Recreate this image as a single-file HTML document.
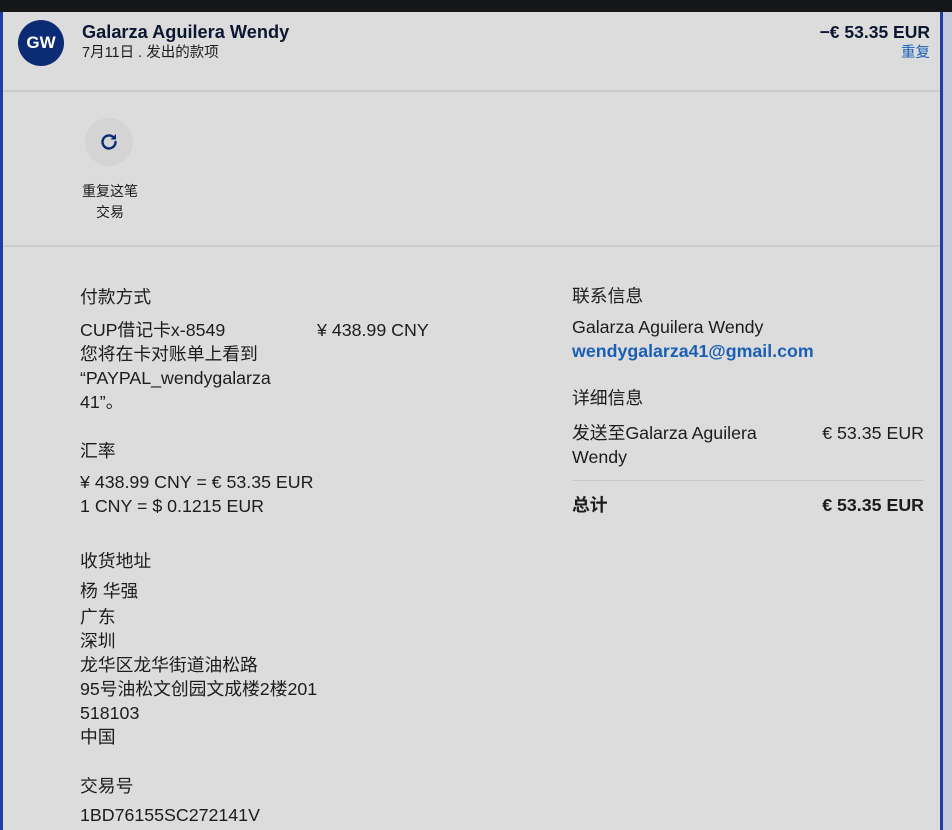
<!DOCTYPE html>
<html><head><meta charset="utf-8"><style>
body{margin:0;width:952px;height:830px;overflow:hidden;background:#dcdcdc;font-family:"Liberation Sans","Noto Sans CJK SC",sans-serif;color:#1c1c1c;position:relative}
.t{position:absolute;font-size:17.8px;line-height:24px;white-space:nowrap}
.b{font-weight:bold}
</style></head><body>
<div style="position:absolute;left:0;top:0;width:952px;height:12px;background:#161718"></div>
<div style="position:absolute;left:0;top:12px;width:3px;height:818px;background:#1f3fa8"></div>
<div style="position:absolute;left:940px;top:12px;width:3px;height:818px;background:#1f3fa8"></div>
<div style="position:absolute;left:943px;top:12px;width:9px;height:818px;background:#c4cad8"></div>
<div style="position:absolute;left:3px;top:90px;width:937px;height:2px;background:#cdcdcd"></div>
<div style="position:absolute;left:3px;top:245px;width:937px;height:2px;background:#cdcdcd"></div>

<div style="position:absolute;left:18px;top:20px;width:46px;height:46px;border-radius:50%;background:#0b2c74;color:#fff;font-weight:bold;font-size:17px;line-height:46px;text-align:center">GW</div>
<div class="t b" style="left:82px;top:20px;font-size:18.2px;color:#0b1630">Galarza Aguilera Wendy</div>
<div class="t" style="left:82px;top:42px;font-size:14.5px;line-height:22px">7月11日 . 发出的款项</div>
<div class="t b" style="right:22px;top:20px;font-size:17.5px;color:#0b1630">−€ 53.35 EUR</div>
<div class="t" style="right:22px;top:42px;font-size:14.5px;line-height:22px;color:#1a5fb4">重复</div>

<div style="position:absolute;left:85px;top:118px;width:48px;height:48px;border-radius:50%;background:#d4d4d4"></div>
<svg style="position:absolute;left:97px;top:130px" width="24" height="24" viewBox="0 0 24 24"><path d="M18.5 12a6.5 6.5 0 1 1-2.2-4.9" fill="none" stroke="#0b2c74" stroke-width="2.4" stroke-linecap="round"/><path d="M19 4v5.5h-5.5z" fill="#0b2c74"/></svg>
<div class="t" style="left:69px;top:181px;width:82px;text-align:center;font-size:14px;line-height:21px;white-space:normal">重复这笔<br>交易</div>

<div class="t" style="left:80px;top:285px">付款方式</div>
<div class="t" style="left:80px;top:318px">CUP借记卡x-8549</div>
<div class="t" style="left:317px;top:318px">¥ 438.99 CNY</div>
<div class="t" style="left:80px;top:342px">您将在卡对账单上看到</div>
<div class="t" style="left:80px;top:366px">“PAYPAL_wendygalarza</div>
<div class="t" style="left:80px;top:390px">41”。</div>
<div class="t" style="left:80px;top:439px">汇率</div>
<div class="t" style="left:80px;top:470px">¥ 438.99 CNY = € 53.35 EUR</div>
<div class="t" style="left:80px;top:494px">1 CNY = $ 0.1215 EUR</div>
<div class="t" style="left:80px;top:549px">收货地址</div>
<div class="t" style="left:80px;top:579px">杨 华强</div>
<div class="t" style="left:80px;top:605px">广东</div>
<div class="t" style="left:80px;top:629px">深圳</div>
<div class="t" style="left:80px;top:653px">龙华区龙华街道油松路</div>
<div class="t" style="left:80px;top:677px">95号油松文创园文成楼2楼201</div>
<div class="t" style="left:80px;top:701px">518103</div>
<div class="t" style="left:80px;top:725px">中国</div>
<div class="t" style="left:80px;top:774px">交易号</div>
<div class="t" style="left:80px;top:803px">1BD76155SC272141V</div>

<div class="t" style="left:572px;top:284px">联系信息</div>
<div class="t" style="left:572px;top:315px">Galarza Aguilera Wendy</div>
<div class="t b" style="left:572px;top:339px;color:#1a5fb4">wendygalarza41@gmail.com</div>
<div class="t" style="left:572px;top:386px">详细信息</div>
<div class="t" style="left:572px;top:421px">发送至Galarza Aguilera</div>
<div class="t" style="left:572px;top:445px">Wendy</div>
<div class="t" style="right:28px;top:421px">€ 53.35 EUR</div>
<div style="position:absolute;left:572px;top:480px;width:352px;height:1px;background:#c8c8c8"></div>
<div class="t b" style="left:572px;top:493px">总计</div>
<div class="t b" style="right:28px;top:493px">€ 53.35 EUR</div>
</body></html>
